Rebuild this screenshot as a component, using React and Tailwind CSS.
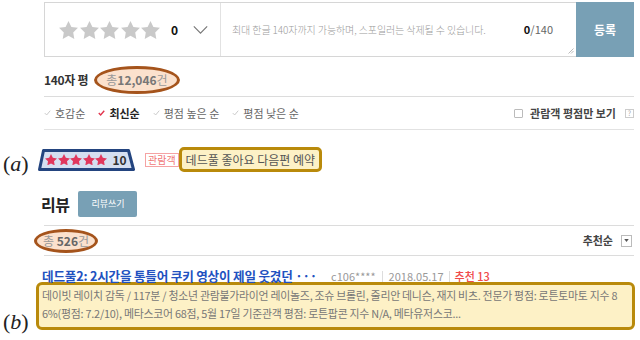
import React from 'react';

const STAR = 'M12 2l3.09 6.26L22 9.27l-5 4.87 1.18 6.88L12 17.77l-6.18 3.25L7 14.14 2 9.27l6.91-1.01L12 2z';

const Star = ({ className }) => (
  <svg viewBox="2 2 20 19.1" className={className}>
    <path d={STAR} fill="currentColor" />
  </svg>
);

const Check = ({ red }) => (
  <svg viewBox="0 0 8 7" className="w-[7px] h-[6px] mr-[4px]">
    <polyline points="0.8,3.6 3,5.8 7.2,0.8" fill="none" stroke={red ? '#e2344c' : '#c8c8c8'} strokeWidth={red ? 1.6 : 1.1} />
  </svg>
);

const sorts = [
  { label: '호감순' },
  { label: '최신순', active: true },
  { label: '평점 높은 순' },
  { label: '평점 낮은 순' },
];

const App = () => {
  return (
    <div className="relative w-[640px] h-[340px] overflow-hidden bg-white text-[#333] font-['Noto_Sans_CJK_KR','Noto_Sans',sans-serif]">
      {/* annotation labels */}
      <span className="absolute left-[3px] top-[153px] font-['Liberation_Serif',serif] text-[22px] leading-[22px] text-[#222]">
        (<i>a</i>)
      </span>
      <span className="absolute left-[3px] top-[311px] font-['Liberation_Serif',serif] text-[22px] leading-[22px] text-[#222]">
        (<i>b</i>)
      </span>

      <div className="ml-[44px] mr-[6px] pt-[2px]">
        {/* write box */}
        <div className="flex h-[55px] border border-[#d6d6d6]">
          <div className="flex w-[176px] items-center pl-[14px] border-r border-[#e2e2e2]">
            <div className="flex gap-[1.5px] text-[#c9c9c9]">
              {[0, 1, 2, 3, 4].map((i) => (
                <Star key={i} className="w-[19px] h-[18px]" />
              ))}
            </div>
            <span className="ml-[11px] text-[12px] font-bold text-[#111]">0</span>
            <svg viewBox="0 0 16 9" className="ml-[15px] w-[15px] h-[8px]">
              <polyline points="0.5,0.5 8,8 15.5,0.5" fill="none" stroke="#777" strokeWidth="1.3" />
            </svg>
          </div>
          <div className="relative flex flex-1 items-center pl-[11px] pr-[23px]">
            <span className="text-[10px] tracking-[-0.1px] text-[#9a9a9a] font-light">
              최대 한글 140자까지 가능하며, 스포일러는 삭제될 수 있습니다.
            </span>
            <span className="ml-auto text-[11px] text-[#666]">
              <b className="text-[#111]">0</b>/140
            </span>
            <svg viewBox="0 0 6 6" className="absolute right-[2px] bottom-[2px] w-[6px] h-[6px]">
              <line x1="0.5" y1="5.5" x2="5.5" y2="0.5" stroke="#aaa" strokeWidth="0.8" />
              <line x1="3" y1="5.5" x2="5.5" y2="3" stroke="#aaa" strokeWidth="0.8" />
            </svg>
          </div>
          <button className="w-[58px] -my-px -mr-px bg-[#78a0b5] text-[12px] font-bold text-white">등록</button>
        </div>

        {/* count */}
        <div className="flex h-[40px] items-center pt-[6px] border-b border-[#dcdcdc]">
          <span className="text-[12px] font-bold tracking-[-0.3px] text-[#333]">140자 평</span>
          <span className="ml-[6px] inline-flex h-[28px] items-center rounded-[50%] border-[3px] border-[#a5541c] bg-[#fbe1cd] px-[9px] text-[12px] font-bold text-[#777]">
            <span className="font-normal text-[#999]">총</span>12,046<span className="font-normal text-[#999]">건</span>
          </span>
        </div>

        {/* sort */}
        <div className="flex h-[33px] items-center border-b border-[#e2e2e2] text-[11px]">
          {sorts.map((s) => (
            <span key={s.label} className={`mr-[13px] flex items-center ${s.active ? 'font-bold text-[#222]' : 'text-[#666]'}`}>
              <Check red={s.active} />
              {s.label}
            </span>
          ))}
          <span className="ml-auto flex items-center">
            <span className="w-[9px] h-[9px] border border-[#bbb] rounded-[1px] mr-[7px]" />
            <span className="font-bold text-[#444]">관람객 평점만 보기</span>
            <span className="ml-[9px] flex h-[9px] w-[9px] items-center justify-center border border-[#ccc] text-[7px] leading-none text-[#aaa]">?</span>
          </span>
        </div>

        {/* rating row (a) */}
        <div className="mt-[17px] flex h-[25px] items-center">
          <span className="relative -ml-[6px] flex h-[22px] w-[97px] items-center pl-[7px]">
            <svg viewBox="0 0 97 22" className="absolute inset-0 w-[97px] h-[22px]">
              <polygon points="5.5,1.5 90.5,1.5 95.5,20.5 1.5,20.5" fill="#d5dff1" stroke="#23447f" strokeWidth="3" strokeLinejoin="round" />
            </svg>
            <span className="relative flex gap-[0.6px] text-[#e0375d]">
              {[0, 1, 2, 3, 4].map((i) => (
                <Star key={i} className="w-[12px] h-[11.5px]" />
              ))}
            </span>
            <span className="relative ml-[5px] text-[12px] font-bold text-[#333]">10</span>
          </span>
          <span className="ml-[10px] flex h-[14px] items-center border border-[#f5a3a3] px-[2px] text-[10px] text-[#f07878]">관람객</span>
          <span className="flex h-[25px] items-center rounded-[5px] border-[3px] border-[#b98a0b] bg-[#fdf1c6] px-[4px] text-[12px] text-[#555]">
            데드풀 좋아요 다음편 예약
          </span>
        </div>

        {/* review header */}
        <div className="mt-[19px] flex items-center pb-[8px] border-b border-[#dcdcdc]">
          <span className="-ml-[3px] text-[16px] font-bold tracking-[-0.5px] text-[#222]">리뷰</span>
          <button className="ml-[9px] h-[26px] w-[59px] rounded-[2px] bg-[#78a0b5] text-[9px] text-white">리뷰쓰기</button>
        </div>

        {/* total */}
        <div className="flex h-[30px] items-center border-b border-[#dcdcdc]">
          <span className="-ml-[10px] inline-flex h-[24px] items-center rounded-[50%] border-[3px] border-[#a5541c] bg-[#fbe1cd] px-[6px] text-[12px] font-bold text-[#666]">
            <span className="font-normal text-[#999]">총&nbsp;</span>526<span className="font-normal text-[#999]">건</span>
          </span>
          <span className="ml-auto text-[11px] font-bold text-[#444]">추천순</span>
          <span className="ml-[8px] mr-[2px] flex h-[12px] w-[11px] items-center justify-center border border-[#bbb]">
            <svg viewBox="0 0 6 4" className="w-[5px] h-[3px]">
              <polygon points="0,0 6,0 3,4" fill="#555" />
            </svg>
          </span>
        </div>

        {/* review item */}
        <div className="mt-[12px] flex h-[16px] items-center">
          <span className="-ml-[2px] text-[12.6px] font-bold tracking-[-0.2px] text-[#2151c0]">
            데드풀2: 2시간을 통틀어 쿠키 영상이 제일 웃겼던 ···
          </span>
          <span className="ml-[14px] text-[11px] text-[#999]">c106****</span>
          <span className="mx-[6px] h-[11px] w-px bg-[#ddd]" />
          <span className="text-[11px] text-[#999]">2018.05.17</span>
          <span className="mx-[5px] h-[11px] w-px bg-[#ddd]" />
          <span className="text-[11px] font-medium text-[#f04a4a]">추천 13</span>
        </div>
        <div className="-ml-[8px] -mr-[1px] -mt-[2px] h-[48px] rounded-[6px] border-[3px] border-[#b98a0b] bg-[#fdf1c6] pl-[3px] pt-[1px] text-[10.9px] leading-[18px] tracking-[-0.25px] text-[#777] whitespace-nowrap overflow-hidden">
          <div>데이빗 레이치 감독 / 117분 / 청소년 관람불가라이언 레이놀즈, 조슈 브롤린, 줄리안 데니슨, 재지 비츠. 전문가 평점: 로튼토마토 지수 8</div>
          <div>6%(평점: 7.2/10), 메타스코어 68점, 5월 17일 기준관객 평점: 로튼팝콘 지수 N/A, 메타유저스코...</div>
        </div>
      </div>
    </div>
  );
};

export default App;
